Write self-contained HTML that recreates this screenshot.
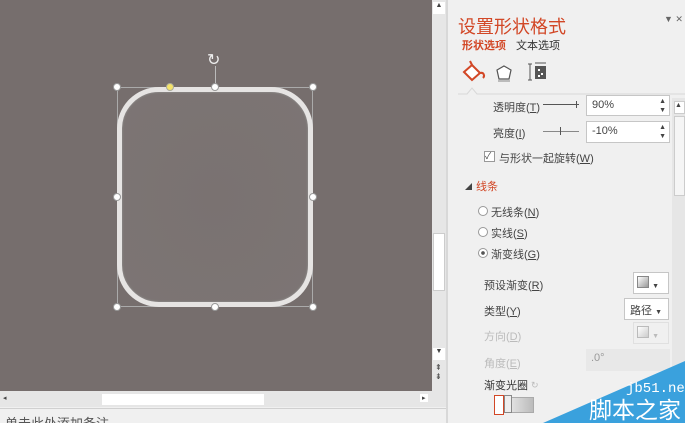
<!DOCTYPE html>
<html><head><meta charset="utf-8"><style>
*{margin:0;padding:0;box-sizing:border-box}
html,body{width:685px;height:423px;overflow:hidden}
body{background:#f0f0f0;font-family:"Liberation Sans","Noto Sans CJK SC",sans-serif;position:relative;font-size:11px;color:#444}
.a{position:absolute;white-space:nowrap}
.h{position:absolute;width:8px;height:8px;border-radius:50%;background:#fff;border:1px solid #999;margin:-4px 0 0 -4px}
.inp{position:absolute;background:#fff;border:1px solid #c6c6c6;font-size:11px;padding:3px 5px;color:#444}
.rad{position:absolute;width:10px;height:10px;border-radius:50%;border:1px solid #999;background:#fff}
</style></head><body>
<div class="a" style="left:0;top:0;width:432px;height:391px;background:#766e6d"></div>
<div class="a" style="left:117px;top:87px;width:196px;height:220px;border:1px solid #aaa"></div>
<div class="a" style="left:117px;top:87px;width:196px;height:220px;border-radius:42px;border:5px solid #e6e4e3;background:radial-gradient(#7a7271,#7c7574);box-shadow:inset 0 0 2px #999"></div>
<div class="a" style="left:215px;top:66px;width:1px;height:21px;background:#bbb"></div>
<div class="a" style="left:207px;top:50px;font-size:16px;color:#eee">↻</div>
<div class="h" style="left:117px;top:87px"></div><div class="h" style="left:215px;top:87px"></div><div class="h" style="left:313px;top:87px"></div>
<div class="h" style="left:117px;top:197px"></div><div class="h" style="left:313px;top:197px"></div>
<div class="h" style="left:117px;top:307px"></div><div class="h" style="left:215px;top:307px"></div><div class="h" style="left:313px;top:307px"></div>
<div class="h" style="left:170px;top:87px;background:#f4e36a;border-color:#aa9"></div>
<div class="a" style="left:432px;top:0;width:14px;height:391px;background:#e6e6e6"></div>
<div class="a" style="left:433px;top:233px;width:12px;height:58px;background:#fff;border:1px solid #ccc"></div>
<div class="a" style="left:433px;top:2px;width:12px;height:12px;background:#fff;font-size:7px;text-align:center">▲</div>
<div class="a" style="left:433px;top:348px;width:12px;height:12px;background:#fff;font-size:7px;text-align:center">▼</div>
<div class="a" style="left:435px;top:363px;font-size:8px">⇞<br>⇟</div>
<div class="a" style="left:0;top:391px;width:446px;height:16px;background:#e6e6e6"></div>
<div class="a" style="left:102px;top:394px;width:162px;height:11px;background:#fff"></div>
<div class="a" style="left:3px;top:394px;font-size:7px">◂</div>
<div class="a" style="left:420px;top:394px;font-size:7px;background:#fff;padding:0 2px">▸</div>
<div class="a" style="left:0;top:408px;width:446px;height:1px;background:#d0d0d0"></div>
<div class="a" style="left:5px;top:413px;font-size:13px;color:#555">单击此处添加备注</div>
<div class="a" style="left:446px;top:0;width:2px;height:423px;background:#d8d8d8"></div>
<div class="a" style="left:458px;top:13px;font-size:18px;color:#d24726">设置形状格式</div>
<div class="a" style="left:664px;top:14px;font-size:9px;color:#666">▼ ✕</div>
<div class="a" style="left:462px;top:37px;font-size:11px;color:#d24726;font-weight:bold">形状选项</div>
<div class="a" style="left:516px;top:37px;font-size:11px;color:#333">文本选项</div>
<svg class="a" style="left:448px;top:58px" width="237" height="40">
<path d="M16 14 L24 7 L32 15 L24 22 Z" fill="#fff" stroke="#d24726" stroke-width="2"/>
<path d="M24 7 L22 3 M32 15 C36 14 37 18 35 20" stroke="#d24726" stroke-width="2" fill="none"/>
<path d="M56 8 L63 12 L61 21 L51 21 L49 12 Z" fill="#fff" stroke="#555" stroke-width="1.2"/>
<path d="M50 23 H62" stroke="#bbb" stroke-width="2"/>
<rect x="87" y="8" width="11" height="13" fill="#555"/><path d="M82 6 V22 M80 6 H84 M80 22 H84 M87 5 H98" stroke="#555" stroke-width="1"/>
<rect x="90" y="11" width="2" height="2" fill="#fff"/><rect x="93" y="15" width="2" height="2" fill="#fff"/><rect x="90" y="17" width="2" height="2" fill="#fff"/>
<path d="M10 36 L19 36 L24 30 L29 36 L237 36" stroke="#d8d8d8" fill="none"/>
</svg>
<div class="a" style="left:672px;top:98px;width:13px;height:325px;background:#e6e6e6"></div>
<div class="a" style="left:674px;top:101px;width:11px;height:13px;background:#fff;font-size:7px;border:1px solid #ccc">▲</div>
<div class="a" style="left:674px;top:116px;width:11px;height:80px;background:#f5f5f5;border:1px solid #ccc"></div>
<div class="a" style="left:493px;top:99px;font-size:11px">透明度(<u>T</u>)</div>
<div class="a" style="left:543px;top:104px;width:36px;height:1px;background:#555"></div><div class="a" style="left:576px;top:101px;width:1px;height:7px;background:#555"></div>
<div class="inp" style="left:586px;top:95px;width:84px;height:21px">90%<span style="position:absolute;right:3px;top:1px;font-size:7px;line-height:9px">▲<br>▼</span></div>
<div class="a" style="left:493px;top:125px;font-size:11px">亮度(<u>I</u>)</div>
<div class="a" style="left:543px;top:131px;width:36px;height:1px;background:#888"></div><div class="a" style="left:560px;top:127px;width:1px;height:8px;background:#555"></div>
<div class="inp" style="left:586px;top:121px;width:84px;height:22px">-10%<span style="position:absolute;right:3px;top:1px;font-size:7px;line-height:9px">▲<br>▼</span></div>
<div class="a" style="left:484px;top:151px;width:11px;height:11px;border:1px solid #999;background:#fff;font-size:9px;line-height:9px">✓</div>
<div class="a" style="left:499px;top:150px;font-size:11px">与形状一起旋转(<u>W</u>)</div>
<div class="a" style="left:465px;top:182px;font-size:7px">◢</div>
<div class="a" style="left:476px;top:178px;font-size:11px;color:#d24726">线条</div>
<div class="rad" style="left:478px;top:206px"></div><div class="a" style="left:491px;top:204px">无线条(<u>N</u>)</div>
<div class="rad" style="left:478px;top:227px"></div><div class="a" style="left:491px;top:225px">实线(<u>S</u>)</div>
<div class="rad" style="left:478px;top:248px;background:radial-gradient(#555 30%,#fff 35%)"></div><div class="a" style="left:491px;top:246px">渐变线(<u>G</u>)</div>
<div class="a" style="left:484px;top:277px">预设渐变(<u>R</u>)</div>
<div class="inp" style="left:633px;top:272px;width:36px;height:22px;padding:3px"><span style="display:inline-block;width:12px;height:12px;border:1px solid #888;background:linear-gradient(135deg,#fff,#999)"></span> <span style="font-size:7px">▼</span></div>
<div class="a" style="left:484px;top:303px">类型(<u>Y</u>)</div>
<div class="inp" style="left:624px;top:298px;width:45px;height:22px">路径 <span style="font-size:7px">▼</span></div>
<div class="a" style="left:484px;top:328px;color:#bbb">方向(<u>D</u>)</div>
<div class="a" style="left:633px;top:322px;width:36px;height:22px;border:1px solid #e0e0e0;padding:3px"><span style="display:inline-block;width:12px;height:12px;border:1px solid #bbb;background:linear-gradient(135deg,#fff,#ccc)"></span> <span style="font-size:7px;color:#bbb">▼</span></div>
<div class="a" style="left:484px;top:355px;color:#bbb">角度(<u>E</u>)</div>
<div class="a" style="left:586px;top:349px;width:84px;height:22px;background:#e8e8e8;color:#999;padding:3px 5px">.0°</div>
<div class="a" style="left:484px;top:377px;color:#333">渐变光圈</div>
<div class="a" style="left:531px;top:380px;color:#bbb;font-size:9px">↻</div>
<div class="a" style="left:494px;top:397px;width:40px;height:16px;background:linear-gradient(90deg,#fff,#bbb);border:1px solid #aaa"></div>
<div class="a" style="left:494px;top:395px;width:10px;height:20px;background:#fff;border:1px solid #d24726"></div>
<div class="a" style="left:504px;top:395px;width:8px;height:18px;background:#eee;border:1px solid #888"></div>
<svg class="a" style="left:543px;top:349px" width="142" height="74"><path d="M0 74 L142 12 L142 74 Z" fill="#3aa1dd"/></svg>
<div class="a" style="left:626px;top:381px;font-size:14px;color:#fff;font-family:'Liberation Mono',monospace;line-height:16px">jb51.net</div>
<div class="a" style="left:589px;top:394px;font-size:23px;color:#fff;font-family:'Noto Sans CJK SC',sans-serif;line-height:28px">脚本之家</div>
</body></html>
